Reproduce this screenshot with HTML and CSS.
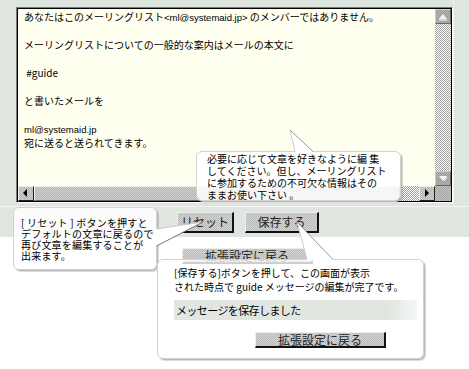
FILE: index.html
```html
<!DOCTYPE html>
<html lang="ja">
<head>
    <meta charset="UTF-8">
    <title>guide メッセージの編集</title>
    <link rel="stylesheet" href="styles.css">
</head>
<body>

    <!-- Editor panel -->
    <div class="panel">
        <div class="editor-row">
            <div class="editor-cell">
                <div class="editor">
                    <div class="editor-inner">
                        <div class="editor-text">
                            <div class="ln">あなたはこのメーリングリスト<span class="en">&lt;ml@systemaid.jp&gt;</span> のメンバーではありません。</div>
                            <div class="ln"></div>
                            <div class="ln">メーリングリストについての一般的な案内はメールの本文に</div>
                            <div class="ln"></div>
                            <div class="ln"> #guide</div>
                            <div class="ln"></div>
                            <div class="ln">と書いたメールを</div>
                            <div class="ln"></div>
                            <div class="ln"><span class="en">ml@systemaid.jp</span></div>
                            <div class="ln">宛に送ると送られてきます。</div>
                        </div>
                        <div class="vscroll">
                            <span class="sb-btn sb-off">
                                <svg width="16" height="15" viewBox="0 0 16 15"><polygon points="4,10 8,5 12,10" fill="#f4f4f4"/><line x1="4" y1="11" x2="12" y2="11" stroke="#fff"/></svg>
                            </span>
                            <span class="sb-track"></span>
                            <span class="sb-btn sb-off">
                                <svg width="16" height="15" viewBox="0 0 16 15"><polygon points="4,5 12,5 8,10" fill="#f4f4f4"/><line x1="9" y1="10" x2="12" y2="6" stroke="#fff"/></svg>
                            </span>
                        </div>
                        <div class="hscroll">
                            <span class="sb-btn">
                                <svg width="16" height="15" viewBox="0 0 16 15"><polygon points="9,3 9,11 5,7" fill="#000"/></svg>
                            </span>
                            <span class="sb-thumb"></span>
                            <span class="sb-track"></span>
                            <span class="sb-btn">
                                <svg width="16" height="15" viewBox="0 0 16 15"><polygon points="6,3 6,11 10,7" fill="#000"/></svg>
                            </span>
                        </div>
                        <div class="sb-corner"></div>
                    </div>
                </div>
            </div>
        </div>
        <div class="button-row">
            <button class="btn btn-reset">リセット</button>
            <button class="btn btn-save">保存する</button>
        </div>
    </div>

    <div class="back-row">
        <button class="btn btn-back">拡張設定に戻る</button>
    </div>

    <!-- Help bubbles -->
    <div class="bubble bubble-edit">必要に応じて文章を好きなように編 集<br>してください。但し、メーリングリスト<br>に参加するための不可欠な情報はその<br>ままお使い下さい 。</div>

    <div class="bubble bubble-reset">[ リセット ] ボタンを押すと<br>デフォルトの文章に戻るので<br>再び文章を編集することが<br>出来ます。</div>

    <div class="bubble bubble-save">
        <p class="save-text">[保存する]ボタンを押して、この画面が表示<br>された時点で guide メッセージの編集が完了です。</p>
        <div class="notice">メッセージを保存しました</div>
        <button class="btn btn-back btn-in-bubble">拡張設定に戻る</button>
    </div>

    <!-- Bubble tails -->
    <svg class="tails" width="469" height="369" viewBox="0 0 469 369">
        <polygon points="290,130 295,152.5 313,152.5" fill="#fff"/>
        <line x1="290" y1="130" x2="295" y2="151.5" stroke="#ccc"/>
        <line x1="290" y1="130" x2="313" y2="151.5" stroke="#999"/>

        <polygon points="155.5,229 203,222 155.5,246" fill="#fff"/>
        <line x1="156.5" y1="229" x2="203" y2="222" stroke="#ccc"/>
        <line x1="156.5" y1="246" x2="203" y2="222" stroke="#777"/>

        <polygon points="297,222 307,260.5 333,260.5" fill="#fff"/>
        <line x1="297" y1="222" x2="307" y2="259.5" stroke="#ccc"/>
        <line x1="297" y1="222" x2="333" y2="259.5" stroke="#999"/>
    </svg>

</body>
</html>
```

FILE: styles.css
```css
body {
    margin: 0;
    background-color: #fff;
    font-family: "Noto Sans CJK JP", sans-serif;
    font-size: 10px;
    color: #000;
    width: 469px;
    height: 369px;
    overflow: hidden;
    position: relative;
}
.panel {
    background-color: #dfe5df;
}
.editor-row {
    border-bottom: 1px solid #f3f5f3;
}
.editor-cell {
    width: 454px;
    box-sizing: border-box;
    padding: 7px 0 3px 16px;
    border-right: 1px solid #f3f5f3;
}
.editor {
    width: 437px;
    height: 196px;
    box-sizing: border-box;
    border: 1px solid;
    border-color: #7a7a7a #fff #fff #7a7a7a;
}
.editor-inner {
    height: 100%;
    box-sizing: border-box;
    border: 1px solid #000;
    background-color: #fffff0;
    display: grid;
    grid-template-columns: 1fr 16px;
    grid-template-rows: 1fr 15px;
    overflow: hidden;
}
.editor-text {
    padding: 1px 0 0 6px;
    overflow: hidden;
}
.ln {
    height: 14px;
    line-height: 14px;
    white-space: pre;
}
.en {
    font-family: "Liberation Sans", sans-serif;
    font-size: 9.5px;
}
.vscroll {
    display: flex;
    flex-direction: column;
}
.hscroll {
    display: flex;
}
.sb-btn {
    width: 16px;
    height: 15px;
    flex: none;
    box-sizing: border-box;
    background: repeating-conic-gradient(#b4b4b4 0 25%, #d0d0d0 0 50%) 0 0 / 2px 2px;
    border: 1px solid;
    border-color: #eee #222 #222 #eee;
}
.sb-btn svg {
    display: block;
    margin: -1px 0 0 -1px;
}
.sb-off {
    background: repeating-conic-gradient(#9c9c9c 0 25%, #b4b4b4 0 50%) 0 0 / 2px 2px;
    border-color: #ccc #666 #666 #ccc;
}
.sb-track {
    flex: 1;
    min-width: 19px;
    background: repeating-conic-gradient(#a0a0a0 0 25%, #fff 0 50%) 0 0 / 2px 2px;
}
.hscroll .sb-track {
    flex: none;
    width: 19px;
}
.sb-thumb {
    flex: 1;
    box-sizing: border-box;
    background: repeating-conic-gradient(#b4b4b4 0 25%, #d0d0d0 0 50%) 0 0 / 2px 2px;
    border: 1px solid;
    border-color: #eee #666 #666 #eee;
}
.sb-corner {
    background: repeating-conic-gradient(#a4a4a4 0 25%, #c4c4c4 0 50%) 0 0 / 2px 2px;
}
.button-row {
    display: flex;
    gap: 11px;
    padding: 5px 0 4px 177px;
}
.btn {
    font-family: "Noto Sans CJK JP", sans-serif;
    font-size: 12px;
    line-height: 1;
    color: #222;
    padding: 0;
    box-sizing: border-box;
    background: repeating-conic-gradient(#bcbcbc 0 25%, #d2d2d2 0 50%) 0 0 / 2px 2px;
    border-style: solid;
    border-width: 1px 2px 2px 1px;
    border-color: #eee #111 #111 #eee;
}
.btn-reset {
    width: 57px;
    height: 21px;
}
.btn-save {
    width: 74px;
    height: 21px;
}
.back-row {
    padding: 11px 0 0 182px;
}
.btn-back {
    width: 131px;
    height: 16px;
}
.bubble {
    position: absolute;
    box-sizing: border-box;
    background-color: rgba(255, 255, 255, 0.85);
    border: 1px solid #d2d2d2;
    border-radius: 6px;
    box-shadow: 1px 1px 0 #b8b8b8, 2px 2px 1px rgba(0, 0, 0, 0.15);
}
.bubble-edit {
    left: 196px;
    top: 151px;
    width: 205px;
    height: 50px;
    padding: 1px 0 0 10px;
    line-height: 12px;
}
.bubble-reset {
    left: 13px;
    top: 207px;
    width: 144px;
    height: 63px;
    padding: 9px 0 0 7px;
    line-height: 11px;
    letter-spacing: 0.2px;
}
.bubble-save {
    left: 157px;
    top: 259px;
    width: 267px;
    height: 100px;
    padding: 6px 0 0 16px;
    background-color: rgba(255, 255, 255, 0.8);
}
.save-text {
    margin: 0;
    line-height: 14px;
}
.notice {
    margin-top: 6px;
    width: 243px;
    height: 20px;
    padding-left: 2px;
    box-sizing: border-box;
    font-size: 11px;
    line-height: 20px;
    letter-spacing: -0.6px;
    background: linear-gradient(to right, #e1e6e1 88%, #f4f6f4);
}
.btn-in-bubble {
    margin: 12px 0 0 81px;
}
.tails {
    position: absolute;
    left: 0;
    top: 0;
    pointer-events: none;
}
```
